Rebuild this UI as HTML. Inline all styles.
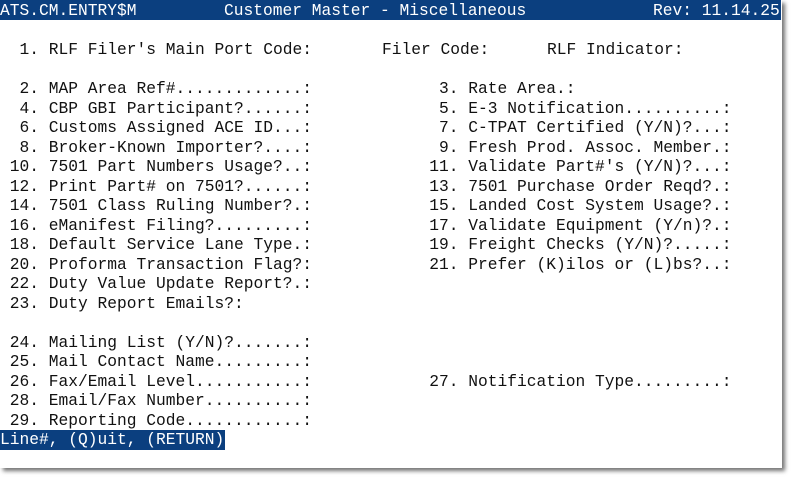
<!DOCTYPE html>
<html><head><meta charset="utf-8"><style>
html,body{margin:0;padding:0;background:#fff;width:792px;height:480px;overflow:hidden}
#win{position:absolute;left:0;top:0;width:782px;height:468px;background:#fff;box-shadow:3px 3px 4px rgba(0,0,0,0.55)}
.r{position:absolute;left:0;height:19.5px;line-height:19.5px;font-family:"Liberation Mono",monospace;font-size:16.25px;color:#111;white-space:pre}
.r span{position:absolute;top:0}
#hdr{position:absolute;left:0;top:0;width:781px;height:20px;background:#0b3f7f}
#ftr{position:absolute;left:0;top:430px;width:225px;height:20px;background:#0b3f7f}
.w{color:#fff}
</style></head><body><div id="win">
<div id="hdr"></div><div id="ftr"></div>
<div class="r w" style="top:1px"><span style="left:0">ATS.CM.ENTRY$M</span><span style="left:224px">Customer Master - Miscellaneous</span><span style="left:653px">Rev: 11.14.25</span></div>
<div class="r" style="top:40px"><span style="left:0">  1. RLF Filer's Main Port Code:</span><span style="left:382px">Filer Code:</span><span style="left:547px">RLF Indicator:</span></div>
<div class="r" style="top:79px"><span style="left:0">  2. MAP Area Ref#.............:</span><span style="left:419.5px">  3. Rate Area.:</span></div>
<div class="r" style="top:98.5px"><span style="left:0">  4. CBP GBI Participant?......:</span><span style="left:419.5px">  5. E-3 Notification..........:</span></div>
<div class="r" style="top:118px"><span style="left:0">  6. Customs Assigned ACE ID...:</span><span style="left:419.5px">  7. C-TPAT Certified (Y/N)?...:</span></div>
<div class="r" style="top:137.5px"><span style="left:0">  8. Broker-Known Importer?....:</span><span style="left:419.5px">  9. Fresh Prod. Assoc. Member.:</span></div>
<div class="r" style="top:157px"><span style="left:0"> 10. 7501 Part Numbers Usage?..:</span><span style="left:419.5px"> 11. Validate Part#'s (Y/N)?...:</span></div>
<div class="r" style="top:176.5px"><span style="left:0"> 12. Print Part# on 7501?......:</span><span style="left:419.5px"> 13. 7501 Purchase Order Reqd?.:</span></div>
<div class="r" style="top:196px"><span style="left:0"> 14. 7501 Class Ruling Number?.:</span><span style="left:419.5px"> 15. Landed Cost System Usage?.:</span></div>
<div class="r" style="top:215.5px"><span style="left:0"> 16. eManifest Filing?.........:</span><span style="left:419.5px"> 17. Validate Equipment (Y/n)?.:</span></div>
<div class="r" style="top:235px"><span style="left:0"> 18. Default Service Lane Type.:</span><span style="left:419.5px"> 19. Freight Checks (Y/N)?.....:</span></div>
<div class="r" style="top:254.5px"><span style="left:0"> 20. Proforma Transaction Flag?:</span><span style="left:419.5px"> 21. Prefer (K)ilos or (L)bs?..:</span></div>
<div class="r" style="top:274px"><span style="left:0"> 22. Duty Value Update Report?.:</span></div>
<div class="r" style="top:293.5px"><span style="left:0"> 23. Duty Report Emails?:</span></div>
<div class="r" style="top:332.5px"><span style="left:0"> 24. Mailing List (Y/N)?.......:</span></div>
<div class="r" style="top:352px"><span style="left:0"> 25. Mail Contact Name.........:</span></div>
<div class="r" style="top:371.5px"><span style="left:0"> 26. Fax/Email Level...........:</span><span style="left:419.5px"> 27. Notification Type.........:</span></div>
<div class="r" style="top:391px"><span style="left:0"> 28. Email/Fax Number..........:</span></div>
<div class="r" style="top:410.5px"><span style="left:0"> 29. Reporting Code............:</span></div>
<div class="r w" style="top:430px"><span style="left:0">Line#, (Q)uit, (RETURN)</span></div>
</div></body></html>
